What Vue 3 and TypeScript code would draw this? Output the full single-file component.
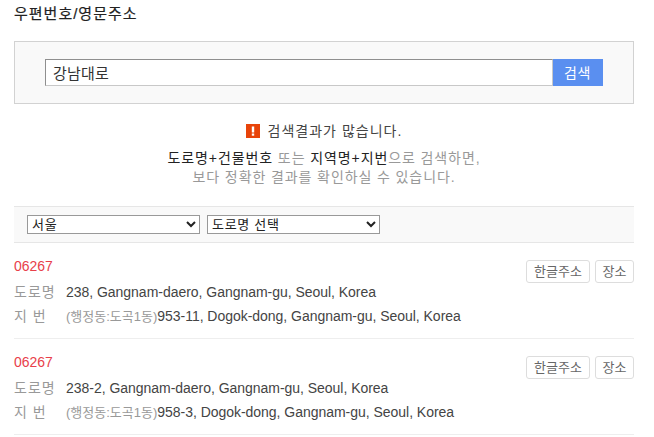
<script setup lang="ts">
interface Row { zip: string; road: string; dong: string; jibun: string }
const rows: Row[] = [
  { zip: '06267', road: '238, Gangnam-daero, Gangnam-gu, Seoul, Korea', dong: '(행정동:도곡1동)', jibun: '953-11, Dogok-dong, Gangnam-gu, Seoul, Korea' },
  { zip: '06267', road: '238-2, Gangnam-daero, Gangnam-gu, Seoul, Korea', dong: '(행정동:도곡1동)', jibun: '958-3, Dogok-dong, Gangnam-gu, Seoul, Korea' },
]
</script>

<template>
  <div class="page">
    <h1 class="title">우편번호/영문주소</h1>
    <div class="search">
      <input class="field" type="text" value="강남대로" />
      <button class="go" type="button">검색</button>
    </div>
    <div class="notice">
      <p class="warn">
        <svg class="icon" width="14" height="14" viewBox="0 0 14 14">
          <rect width="14" height="14" fill="#e8440a" />
          <rect x="5.8" y="2.5" width="2.4" height="6" fill="#fff" />
          <rect x="5.8" y="9.5" width="2.4" height="2.2" fill="#fff" />
        </svg>
        검색결과가 많습니다.
      </p>
      <p class="hint"><b>도로명+건물번호</b> 또는 <b>지역명+지번</b>으로 검색하면,<br />보다 정확한 결과를 확인하실 수 있습니다.</p>
    </div>
    <div class="filters">
      <select class="sel"><option>서울</option></select>
      <select class="sel"><option>도로명 선택</option></select>
    </div>
    <ul class="list">
      <li v-for="(r, i) in rows" :key="i" class="row">
        <div class="actions">
          <button class="mini wide" type="button">한글주소</button>
          <button class="mini narrow" type="button">장소</button>
        </div>
        <div class="zip">{{ r.zip }}</div>
        <div class="line"><span class="label">도로명</span><span>{{ r.road }}</span></div>
        <div class="line"><span class="label">지  번</span><span><span class="dong">{{ r.dong }}</span>{{ r.jibun }}</span></div>
      </li>
    </ul>
  </div>
</template>

<style>
html, body { background: #fff; }
</style>

<style scoped>
.page {
  width: 654px;
  height: 437px;
  overflow: hidden;
  box-sizing: border-box;
  padding: 0 20px 0 14px;
  font-family: "Liberation Sans", "Noto Sans CJK KR", sans-serif;
  font-size: 14px;
  letter-spacing: -0.03px;
  color: #444;
}
.title {
  margin: 0;
  height: 41px;
  padding-top: 5px;
  box-sizing: border-box;
  font-size: 15px;
  line-height: 18px;
  font-weight: 400;
  letter-spacing: 1px;
  color: #222;
  -webkit-text-stroke: 0.2px #222;
}
.search {
  display: flex;
  height: 63px;
  box-sizing: border-box;
  border: 1px solid #d2d2d2;
  background: #f9f9f9;
  padding: 17px 30px;
}
.field {
  flex: 1;
  min-width: 0;
  height: 27px;
  box-sizing: border-box;
  margin: 0;
  padding: 0 7px;
  border: 1px solid #c8c8c8;
  border-top-color: #8f8f8f;
  border-left-color: #8f8f8f;
  border-radius: 0;
  background: #fff;
  font: inherit;
  font-size: 15px;
  letter-spacing: 0.2px;
  color: #333;
  outline: none;
}
.go {
  width: 50px;
  height: 27px;
  margin: 0;
  padding: 0 1px 2px 0;
  border: 0;
  background: #5a8ff0;
  color: #fff;
  font: inherit;
  font-size: 14px;
  letter-spacing: 0.5px;
}
.notice {
  text-align: center;
  height: 102px;
  box-sizing: border-box;
  padding-top: 18px;
}
.warn {
  margin: 0;
  font-size: 14px;
  line-height: 18px;
  letter-spacing: 1px;
  color: #444;
}
.icon {
  vertical-align: -2px;
  margin-right: 3px;
}
.hint {
  margin: 9px 0 0;
  font-size: 14px;
  line-height: 19px;
  color: #999;
  letter-spacing: 0.9px;
}
.hint b {
  font-weight: 400;
  color: #222;
}
.filters {
  display: flex;
  gap: 7px;
  height: 37px;
  box-sizing: border-box;
  padding: 8px 13px;
  border-top: 1px solid #e6e6e6;
  border-bottom: 1px solid #e6e6e6;
  background: #f9f9f9;
}
.sel {
  width: 173px;
  height: 19px;
  box-sizing: border-box;
  margin: 0;
  padding: 0 0 2px;
  border: 1px solid #999;
  border-radius: 0;
  background-color: #fff;
  font: inherit;
  font-size: 13px;
  letter-spacing: 0.7px;
  color: #222;
}
.list {
  margin: 0;
  padding: 0;
  list-style: none;
}
.row {
  position: relative;
  height: 96px;
  box-sizing: border-box;
  padding-top: 13px;
  border-bottom: 1px solid #eee;
}
.actions {
  position: absolute;
  top: 17px;
  right: 0;
  display: flex;
  gap: 5px;
}
.mini {
  height: 23px;
  margin: 0;
  padding: 0 0 3px;
  border: 1px solid #ddd;
  border-radius: 3px;
  background: #fff;
  font: inherit;
  font-size: 13px;
  letter-spacing: 0;
  color: #666;
}
.wide { width: 64px; }
.narrow { width: 39px; }
.zip {
  height: 20px;
  line-height: 20px;
  color: #e8404a;
}
.line {
  display: flex;
  height: 24px;
  line-height: 24px;
  margin-top: 4px;
}
.line + .line { margin-top: 0; }
.label {
  width: 52px;
  color: #999;
  white-space: pre;
  letter-spacing: 1px;
}
.dong {
  font-size: 13px;
  letter-spacing: 0;
  color: #999;
}
</style>
